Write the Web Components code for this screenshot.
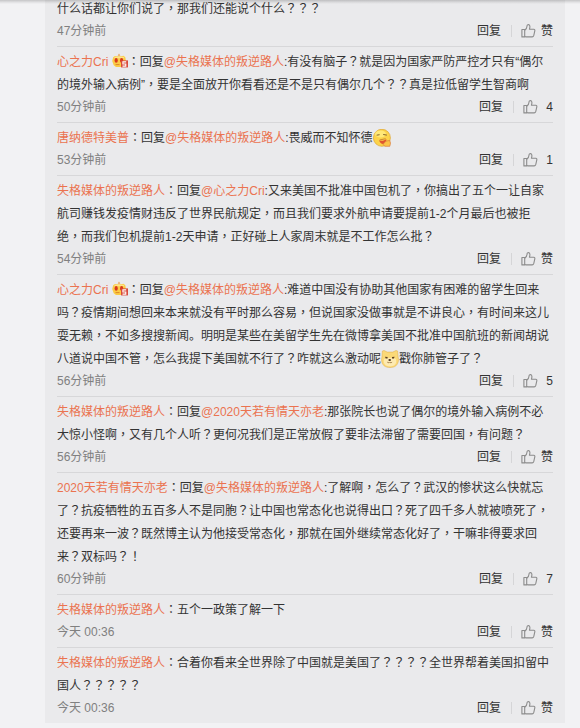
<!DOCTYPE html>
<html lang="zh-CN">
<head>
<meta charset="utf-8">
<title>评论</title>
<style>
  body {
    margin: 0;
    height: 728px;
    overflow: hidden;
    background: #f2f2f4;
    font: 12px/23px "Liberation Sans", "Noto Sans CJK SC", sans-serif;
    color: #333;
  }
  /* punctuation sits in the middle of its cell */
  .mid { font-family: "Liberation Sans", "Noto Sans CJK TC", sans-serif; }
</style>
</head>
<body>
<comment-list>
  <comment-item time="47分钟前">什么话都让你们说了，那我们还能说个什么？？？</comment-item>
  <comment-item time="50分钟前" likes="4"><user-link>心之力Cri</user-link> <face-icon type="badge"></face-icon>：回复<user-link>@失格媒体的叛逆路人</user-link>:有没有脑子？就是因为国家严防严控才只有“偶尔<br>的境外输入病例”，要是全面放开你看看还是不是只有偶尔几个？？真是拉低留学生智商啊</comment-item>
  <comment-item time="53分钟前" likes="1"><user-link>唐纳德特美普</user-link>：回复<user-link>@失格媒体的叛逆路人</user-link>:畏威而不知怀德<face-icon type="smirk"></face-icon></comment-item>
  <comment-item time="54分钟前"><user-link>失格媒体的叛逆路人</user-link>：回复<user-link>@心之力Cri</user-link>:又来美国不批准中国包机了，你搞出了五个一让自家<br>航司赚钱发疫情财违反了世界民航规定，而且我们要求外航申请要提前1-2个月最后也被拒<br>绝，而我们包机提前1-2天申请，正好碰上人家周末就是不工作怎么批？</comment-item>
  <comment-item time="56分钟前" likes="5"><user-link>心之力Cri</user-link> <face-icon type="badge"></face-icon>：回复<user-link>@失格媒体的叛逆路人</user-link>:难道中国没有协助其他国家有困难的留学生回来<br>吗？疫情期间想回来本来就没有平时那么容易，但说国家没做事就是不讲良心，有时间来这儿<br>耍无赖，不如多搜搜新闻。明明是某些在美留学生先在微博拿美国不批准中国航班的新闻胡说<br>八道说中国不管，怎么我提下美国就不行了？咋就这么激动呢<face-icon type="doge"></face-icon>戳你肺管子了？</comment-item>
  <comment-item time="56分钟前"><user-link>失格媒体的叛逆路人</user-link>：回复<user-link>@2020天若有情天亦老</user-link>:那张院长也说了偶尔的境外输入病例不必<br>大惊小怪啊，又有几个人听？更何况我们是正常放假了要非法滞留了需要回国，有问题？</comment-item>
  <comment-item time="60分钟前" likes="7"><user-link>2020天若有情天亦老</user-link>：回复<user-link>@失格媒体的叛逆路人</user-link>:了解啊，怎么了？武汉的惨状这么快就忘<br>了？抗疫牺牲的五百多人不是同胞？让中国也常态化也说得出口？死了四千多人就被喷死了，<br>还要再来一波？既然博主认为他接受常态化，那就在国外继续常态化好了，干嘛非得要求回<br>来？双标吗？！</comment-item>
  <comment-item time="今天 00:36"><user-link>失格媒体的叛逆路人</user-link>：五个一政策了解一下</comment-item>
  <comment-item time="今天 00:36"><user-link>失格媒体的叛逆路人</user-link>：合着你看来全世界除了中国就是美国了？？？？全世界帮着美国扣留中<br>国人？？？？？</comment-item>
</comment-list>

<script>
class CommentList extends HTMLElement {
  constructor() {
    super();
    this.attachShadow({ mode: 'open' });
  }

  connectedCallback() {
    this.shadowRoot.innerHTML = `
      <style>
        :host {
          display: block;
          height: 728px;
          overflow: hidden;
        }
        .shade {
          position: absolute;
          top: 0;
          left: 0;
          right: 0;
          height: 4px;
          background: linear-gradient(rgba(0,0,0,.19), rgba(0,0,0,.08) 50%, rgba(0,0,0,0));
        }
        /* scrolled to the end: the oldest comment runs off the top */
        .panel {
          display: flex;
          flex-direction: column;
          justify-content: flex-end;
          box-sizing: border-box;
          width: 520px;
          height: 723px;
          margin-left: 45px;
          padding: 0 12px;
          background: #eaeaec;
        }
      </style>
      <div class="panel"><slot></slot></div>
      <div class="shade"></div>
    `;
  }
}

class CommentItem extends HTMLElement {
  constructor() {
    super();
    this.attachShadow({ mode: 'open' });
  }

  connectedCallback() {
    this.centerPunctuation();
    this.render();
  }

  // the glyph variant follows lang, so the font alone is not enough
  centerPunctuation() {
    [...this.childNodes].filter(n => n.nodeType === Node.TEXT_NODE).forEach(node => {
      const parts = node.data.split(/([，：？！]+)/).filter(Boolean).map(s => {
        if (!/[，：？！]/.test(s)) return s;
        const span = document.createElement('span');
        span.className = 'mid';
        span.lang = 'zh-TW';
        span.textContent = s;
        return span;
      });
      node.replaceWith(...parts);
    });
  }

  render() {
    const likes = this.getAttribute('likes') || '赞';
    this.shadowRoot.innerHTML = `
      <style>
        :host {
          display: block;
          flex: none;
          border-top: 1px solid #d7d7d9;
          padding: 4px 0;
        }
        .text { white-space: nowrap; }
        .foot {
          display: flex;
          align-items: center;
          height: 22px;
          margin-top: -1px;
          line-height: 22px;
        }
        .time {
          flex: 1;
          color: #808080;
        }
        .sep {
          width: 1px;
          height: 12px;
          margin: 0 9px 0 10px;
          background: #d5d5d7;
        }
        .likes {
          min-width: 10px;
          margin-left: 5px;
          text-align: right;
        }
      </style>
      <div class="text"><slot></slot></div>
      <div class="foot">
        <span class="time">${this.getAttribute('time')}</span>
        <span>回复</span>
        <span class="sep"></span>
        <like-icon></like-icon>
        <span class="likes">${likes}</span>
      </div>
    `;
  }
}

// inline elements: no whitespace may follow </style>, it would be drawn as a gap
class UserLink extends HTMLElement {
  constructor() {
    super();
    this.attachShadow({ mode: 'open' });
    this.shadowRoot.innerHTML = `<style>
        :host { color: #eb7350; cursor: pointer; }
      </style><slot></slot>`;
  }
}

class LikeIcon extends HTMLElement {
  constructor() {
    super();
    this.attachShadow({ mode: 'open' });
    this.shadowRoot.innerHTML = `
      <style>
        :host { display: block; width: 15px; height: 14px; }
        svg { display: block; }
      </style>
      <svg width="15" height="14" viewBox="0 0 15 14" fill="none" stroke="#8c8c8c" stroke-width="1.1" stroke-linejoin="round">
        <path d="M.9 5.5h2.8v7.4H.9z"/>
        <path d="M3.7 6.3C5.4 5.2 6 3.6 6.1 1.8c0-1.7 2.8-1.6 2.8.6 0 1-.2 2-.5 2.9h4.3c1 0 1.3.8 1.1 1.6l-1 4.5c-.3 1-.8 1.5-1.6 1.5H5.2c-.7 0-1.1-.2-1.5-.6"/>
      </svg>
    `;
  }
}

const FACES = {
  badge: `
    <svg width="16" height="16" viewBox="0 0 16 16">
      <path d="M5.6 2.8 7 .5l1.4 2.3z" fill="#e9a55c"/>
      <path d="M1.2 4.2 3 2.9l2 .3h4.3l2.2-.4 1.8 1.5.5 3.2-1.5 4.8-2.5 1.8H4L1.7 12.3.2 8z" fill="#fbcb45"/>
      <path d="M2 5.3h10.5l-.8-1.5H3z" fill="#fde58a"/>
      <ellipse cx="4.2" cy="7.4" rx="1.6" ry="2.3" fill="#d9381c"/>
      <ellipse cx="9.6" cy="7.4" rx="1.6" ry="2.3" fill="#d9381c"/>
      <path d="M3.5 11.6h4" stroke="#dd8927"/>
      <path d="M9 7.4h7v7H9z" fill="#d94a3a"/>
      <path d="M14.2 8.9h-3.3V11h2.9v2.1h-3.3" fill="none" stroke="#fff" stroke-width="1.1"/>
    </svg>`,
  smirk: `
    <svg width="18" height="18" viewBox="0 0 18 18">
      <circle cx="8.9" cy="8.8" r="8.5" fill="#fcd34a" stroke="#dfa52d" stroke-width=".7"/>
      <ellipse cx="7.5" cy="5" rx="5.5" ry="3.5" fill="#ffe877"/>
      <path d="M3.6 6.2l3-.5M10.2 5.5l3.6.6" fill="none" stroke="#75501d" stroke-width=".9"/>
      <path d="M6 11.3c2.5 1.1 5.4.5 7.3-1.3.3 3-1 5.1-3.2 5.1-1.9 0-3.3-1.4-4.1-3.8z" fill="#e0552e"/>
      <path d="M6.6 11l6-1.3" stroke="#a6561e" stroke-width=".6"/>
      <path d="M9.9 15.4l3.1-3.3 1.8-.3 1.9-.3.8 2.6-.7 3.2H12z" fill="#fbc347" stroke="#dd7d3b" stroke-width=".7"/>
    </svg>`,
  doge: `
    <svg width="18" height="18" viewBox="0 0 18 18">
      <path d="M1.4 1 3 .5l3.2 1.6h5.6L15 .5l1.6.5.5 6c.8 2.8.4 6.6-2.2 8.8-3 2.3-8.8 2.3-11.8 0C.6 13.6.1 9.9 1 7z" fill="#fbd977" stroke="#e2b455" stroke-width=".6"/>
      <path d="M3.2 9C5 7.6 13 7.6 14.8 9c1 2.8.3 5-1.6 6.2-2.2 1.3-6.2 1.3-8.4 0C2.9 14 2.2 11.800 3.2 9z" fill="#fdeab2"/>
      <path d="M4 6.8l2.6.3v1.3H4.700zM11 7.1l2.600-.3-.7 1.600H11z" fill="#5d4020"/>
      <ellipse cx="8.700" cy="10" rx="1.300" ry=".9" fill="#4d3520"/>
      <path d="M6.300 12.200c1.100.7 2 .6 2.400-.2.5.8 1.400.9 2.400.2" fill="none" stroke="#8c622f" stroke-width=".8"/>
    </svg>`
};

class FaceIcon extends HTMLElement {
  constructor() {
    super();
    this.attachShadow({ mode: 'open' });
  }

  connectedCallback() {
    this.shadowRoot.innerHTML = `<style>
        :host {
          display: inline-block;
          height: 18px;
          line-height: 0;
          vertical-align: top;
          margin-top: 2px;
        }
        svg { display: block; }
      </style>${FACES[this.getAttribute('type')].trim()}`;
  }
}

customElements.define('comment-list', CommentList);
customElements.define('comment-item', CommentItem);
customElements.define('user-link', UserLink);
customElements.define('like-icon', LikeIcon);
customElements.define('face-icon', FaceIcon);
</script>
</body>
</html>
